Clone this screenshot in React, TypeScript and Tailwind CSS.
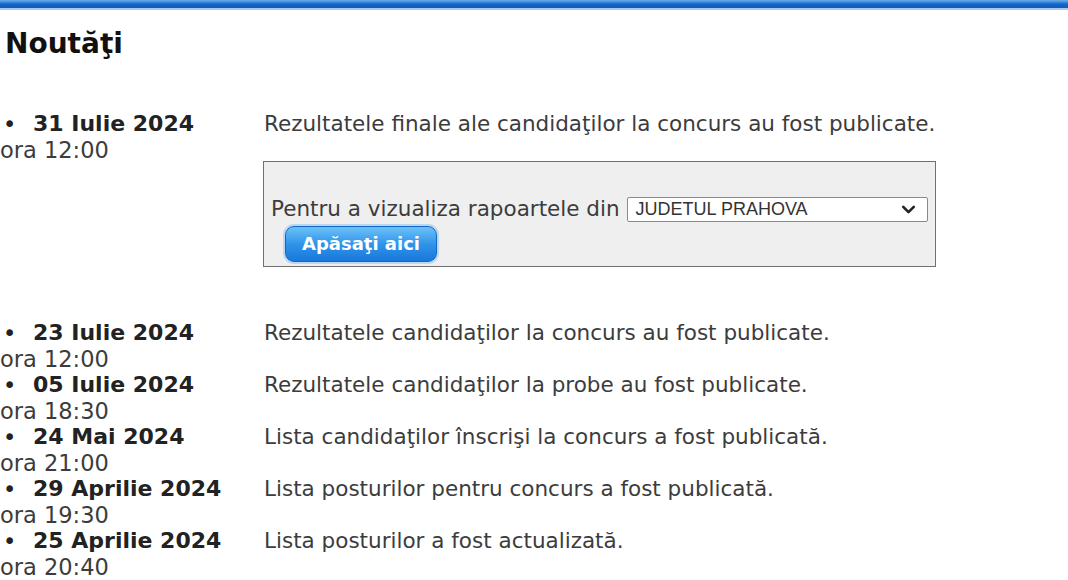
import { ChevronDown } from 'lucide-react';

type Entry = { date: string; time: string; text: string };

const entries: Entry[] = [
    { date: '23 Iulie 2024', time: 'ora 12:00', text: 'Rezultatele candidaţilor la concurs au fost publicate.' },
    { date: '05 Iulie 2024', time: 'ora 18:30', text: 'Rezultatele candidaţilor la probe au fost publicate.' },
    { date: '24 Mai 2024', time: 'ora 21:00', text: 'Lista candidaţilor înscrişi la concurs a fost publicată.' },
    { date: '29 Aprilie 2024', time: 'ora 19:30', text: 'Lista posturilor pentru concurs a fost publicată.' },
    { date: '25 Aprilie 2024', time: 'ora 20:40', text: 'Lista posturilor a fost actualizată.' },
];

const DateCell = ({ date, time }: { date: string; time: string }) => (
    <div className="w-[264px] shrink-0 text-[22.5px]">
        <div className="flex items-center text-[#222] font-bold">
            <span className="w-[33px] pl-[3px] font-normal">•</span>
            <span className="text-[22px]">{date}</span>
        </div>
        <div>{time}</div>
    </div>
);

export default function App() {
    return (
        <div className="min-h-[580px] bg-white text-[#3c3c3c] text-[21.5px] leading-[26px] overflow-hidden" style={{ fontFamily: '"DejaVu Sans", Verdana, sans-serif' }}>
            <div className="h-[10px] bg-gradient-to-b from-[#6cb0ee] via-[#1466c8] to-[#0f5cba] border-b-2 border-[#a9c9ee]" />

            <h1 className="pl-[5px] pt-[17px] text-[28px] leading-[34px] font-bold text-[#111]">Noutăţi</h1>

            <div className="mt-[50px] flex">
                <DateCell date="31 Iulie 2024" time="ora 12:00" />
                <div>
                    <div>Rezultatele finale ale candidaţilor la concurs au fost publicate.</div>
                    <div className="mt-[24px] w-[673px] -ml-px border border-[#707070] bg-[#efefef] pl-[7px] pt-[34px] pb-[4px]">
                        <div className="flex items-center">
                            <span>Pentru a vizualiza rapoartele din</span>
                            <div className="ml-[7px] w-[301px] h-[25px] flex items-center justify-between bg-white border border-[#8a8a8a] rounded-[2px] pl-[8px] pr-[8px] text-[18px] text-[#333]" style={{ fontFamily: '"Liberation Sans", Arial, sans-serif' }}>
                                <span>JUDETUL PRAHOVA</span>
                                <ChevronDown className="w-[21px] h-[21px] text-[#222]" strokeWidth={3} />
                            </div>
                        </div>
                        <button className="mt-[4px] ml-[14px] w-[152px] h-[36px] rounded-[9px] border border-[#1566c0] bg-gradient-to-b from-[#6cc2f8] via-[#2f94ea] to-[#1a78da] shadow-[0_0_0_2px_#b9d8f4] text-white font-bold text-[18px] leading-none">
                            Apăsaţi aici
                        </button>
                    </div>
                </div>
            </div>

            <div className="mt-[53px] flex flex-col">
                {entries.map((e) => (
                    <div key={e.date} className="flex">
                        <DateCell date={e.date} time={e.time} />
                        <div>{e.text}</div>
                    </div>
                ))}
            </div>
        </div>
    );
}
